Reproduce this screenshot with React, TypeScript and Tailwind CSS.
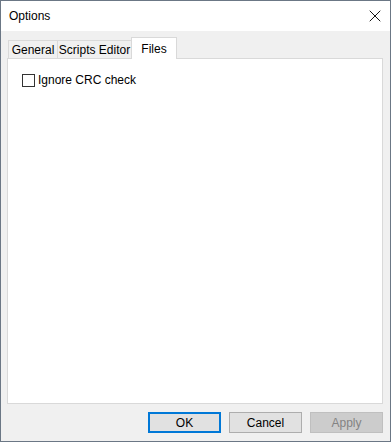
import { X } from "lucide-react";

const tabs = [
  { label: "General", w: "w-[50px]" },
  { label: "Scripts Editor", w: "w-[75px]" },
];

export default function App() {
  return (
    <div
      className="flex h-[442px] w-[391px] flex-col whitespace-nowrap border border-[#6b7785] bg-[#f0f0f0] text-[12px] text-black"
      style={{ fontFamily: '"Liberation Sans", Arial, sans-serif' }}
    >
      {/* title bar */}
      <div className="flex h-[30px] shrink-0 items-center justify-between bg-white pl-2 pr-[5px]">
        <span className="text-[12px]">Options</span>
        <X className="h-[20px] w-[20px]" strokeWidth={1.1} />
      </div>

      <div className="flex flex-1 flex-col pl-[6px] pr-[7px] pt-[6px]">
        {/* tabs */}
        <div className="flex h-[21px] items-end pl-px">
          {tabs.map((t) => (
            <div
              key={t.label}
              className={`${t.w} -mr-px flex h-[18px] items-center justify-center border border-b-0 border-[#d9d9d9] bg-[#f0f0f0]`}
            >
              {t.label}
            </div>
          ))}
          <div className="relative -mb-px flex h-[22px] w-[46px] items-start justify-center border border-b-0 border-[#d9d9d9] bg-white pt-[2px]">
            Files
          </div>
        </div>

        {/* panel */}
        <div className="h-[346px] border border-[#d9d9d9] bg-white px-[14px] pt-[12px]">
          <label className="flex items-center gap-[3px]">
            <span className="h-[13px] w-[13px] border border-[#333333] bg-white" />
            <span>Ignore CRC check</span>
          </label>
        </div>

        {/* buttons */}
        <div className="flex justify-end gap-2 pt-2">
          <button className="h-[21px] w-[73px] border-2 border-[#0078d7] bg-[#e1e1e1]">OK</button>
          <button className="h-[21px] w-[73px] border border-[#adadad] bg-[#e1e1e1]">Cancel</button>
          <button className="h-[21px] w-[73px] border border-[#bfbfbf] bg-[#cccccc] text-[#838383]">Apply</button>
        </div>
      </div>
    </div>
  );
}
